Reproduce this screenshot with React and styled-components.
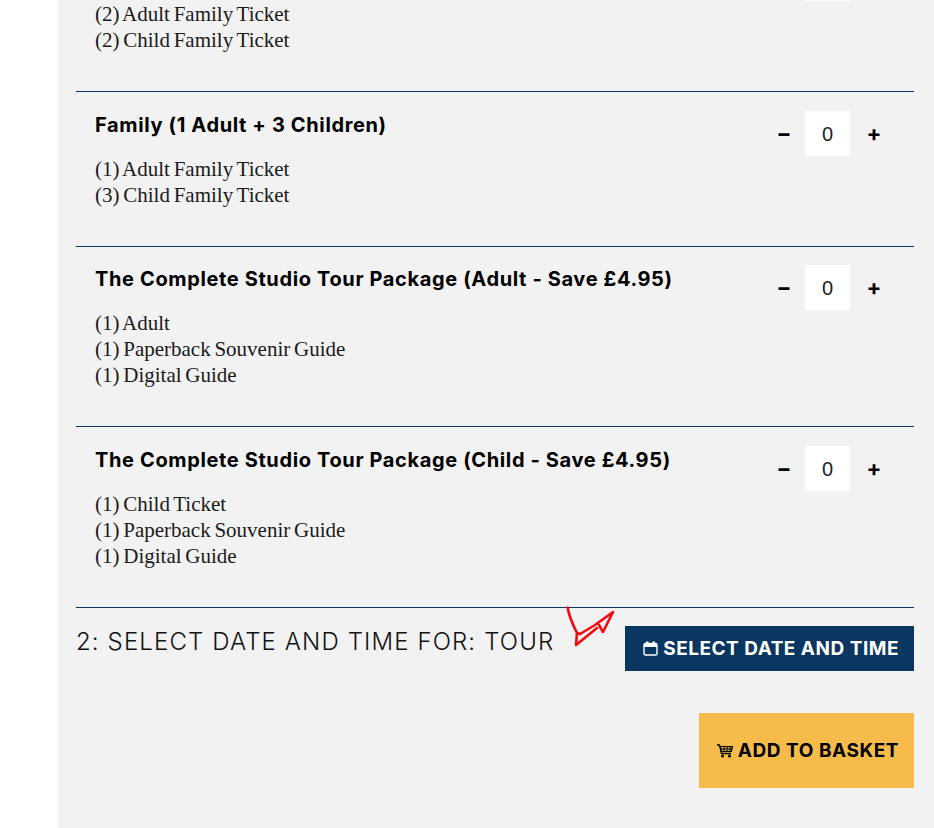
import React from 'react';
import styled, { createGlobalStyle } from 'styled-components';

const GlobalStyle = createGlobalStyle`
  html, body { margin: 0; padding: 0; background: #fff; height: 828px; overflow: hidden; }
`;

const Page = styled.div`
  height: 828px;
  overflow: hidden;
  padding-left: 58px;
`;

const Panel = styled.div`
  background: #f2f2f2;
  height: 892px;
  margin-top: -64px;
  padding: 0 20px 0 18px;
  box-sizing: border-box;
`;

const TicketRow = styled.div`
  display: flex;
  justify-content: space-between;
  border-top: 1px solid #0a3761;
  height: ${p => p.$height}px;
  box-sizing: border-box;
  padding: ${p => p.$top}px 34px 0 19px;
`;

const Title = styled.h3`
  margin: 0 0 17px;
  font: 700 20px/28px Inter, sans-serif;
  letter-spacing: 0.63px;
  color: #000;
`;

const Line = styled.div`
  font: 400 21px/26px "Liberation Serif", serif;
  word-spacing: -1.5px;
  color: #1a1a1a;
`;

const Stepper = styled.div`
  display: flex;
  align-items: center;
  height: 45px;
`;

const StepButton = styled.span`
  width: 12px;
  font: 700 22px/45px Inter, sans-serif;
  color: #000;
  display: flex;
  justify-content: center;
`;

const Count = styled.div`
  width: 45px;
  height: 45px;
  margin: 0 18px 0 15px;
  background: #fff;
  font: 400 20px/46px "Liberation Sans", sans-serif;
  color: #222;
  text-align: center;
`;

const DateRow = styled.div`
  position: relative;
  display: flex;
  justify-content: space-between;
  border-top: 1px solid #0a3761;
  padding-top: 18px;
`;

const DateTitle = styled.h2`
  margin: 0;
  font: 300 24px/32px Inter, sans-serif;
  letter-spacing: 1.12px;
  color: #111;
`;

const Scribble = styled.svg`
  position: absolute;
  left: 479px;
  top: -8px;
`;

const Button = styled.button`
  display: flex;
  align-items: center;
  justify-content: flex-end;
  gap: 5px;
  border: 0;
  padding: 0 15px 0 0;
  font: 700 19px/1 Inter, sans-serif;
  letter-spacing: ${p => p.$spacing}px;
  background: ${p => p.$bg};
  color: ${p => p.$fg};
  width: ${p => p.$width}px;
  height: ${p => p.$height}px;
`;

const BasketWrap = styled.div`
  display: flex;
  justify-content: flex-end;
  margin-top: 42px;
`;

const rows = [
  { height: 155, top: 19, title: 'Family (2 Adults + 2 Children)', lines: ['(2) Adult Family Ticket', '(2) Child Family Ticket'] },
  { height: 155, top: 19, title: 'Family (1 Adult + 3 Children)', lines: ['(1) Adult Family Ticket', '(3) Child Family Ticket'] },
  { height: 180, top: 18, title: 'The Complete Studio Tour Package (Adult - Save £4.95)', lines: ['(1) Adult', '(1) Paperback Souvenir Guide', '(1) Digital Guide'] },
  { height: 181, top: 19, title: 'The Complete Studio Tour Package (Child - Save £4.95)', lines: ['(1) Child Ticket', '(1) Paperback Souvenir Guide', '(1) Digital Guide'] },
];

const CalendarIcon = () => (
  <svg width="15" height="15" viewBox="0 0 15 15">
    <path d="M3 0.5h2.4v2.5H3zM9.6 0.5h2.4v2.5H9.6z" fill="#fff" />
    <rect x="1" y="2.5" width="13" height="11.5" rx="1.5" fill="none" stroke="#fff" strokeWidth="1.4" />
    <rect x="1" y="2.5" width="13" height="3.5" fill="#fff" />
  </svg>
);

const CartIcon = () => (
  <svg width="16" height="14" viewBox="0 0 16 14">
    <path d="M0 1h2.5l2 8.5h9.5" fill="none" stroke="#000" strokeWidth="1.3" />
    <path d="M3.2 2.5H15.5l-1.2 5H4.4z" fill="none" stroke="#000" strokeWidth="1.2" />
    <path d="M3.6 5h11.4M7 2.5v5M10 2.5v5M13 2.5v5" stroke="#000" strokeWidth="1" />
    <circle cx="5.5" cy="12" r="1.5" fill="#000" />
    <circle cx="12.5" cy="12" r="1.5" fill="#000" />
  </svg>
);

export default function App() {
  return (
    <Page>
      <GlobalStyle />
      <Panel>
        {rows.map(row => (
          <TicketRow key={row.title} $height={row.height} $top={row.top}>
            <div>
              <Title>{row.title}</Title>
              {row.lines.map(line => <Line key={line}>{line}</Line>)}
            </div>
            <Stepper>
              <StepButton>−</StepButton>
              <Count>0</Count>
              <StepButton>+</StepButton>
            </Stepper>
          </TicketRow>
        ))}
        <DateRow>
          <DateTitle>2: SELECT DATE AND TIME FOR: TOUR</DateTitle>
          <Scribble width="70" height="55" viewBox="0 0 70 55">
            <path d="M12.7 7.5C13.5 14 18 25 22 33L21 45 42 28M22 33l3 1 15-9 18-13-10 20-4-7" fill="none" stroke="#f5080f" strokeWidth="2.6" strokeLinejoin="round" strokeLinecap="round" />
          </Scribble>
          <Button $bg="#0a3761" $fg="#fff" $width={289} $height={45} $spacing={0.5}>
            <CalendarIcon />
            SELECT DATE AND TIME
          </Button>
        </DateRow>
        <BasketWrap>
          <Button $bg="#f6bc4b" $fg="#000" $width={215} $height={75} $spacing={0.55}>
            <CartIcon />
            ADD TO BASKET
          </Button>
        </BasketWrap>
      </Panel>
    </Page>
  );
}
